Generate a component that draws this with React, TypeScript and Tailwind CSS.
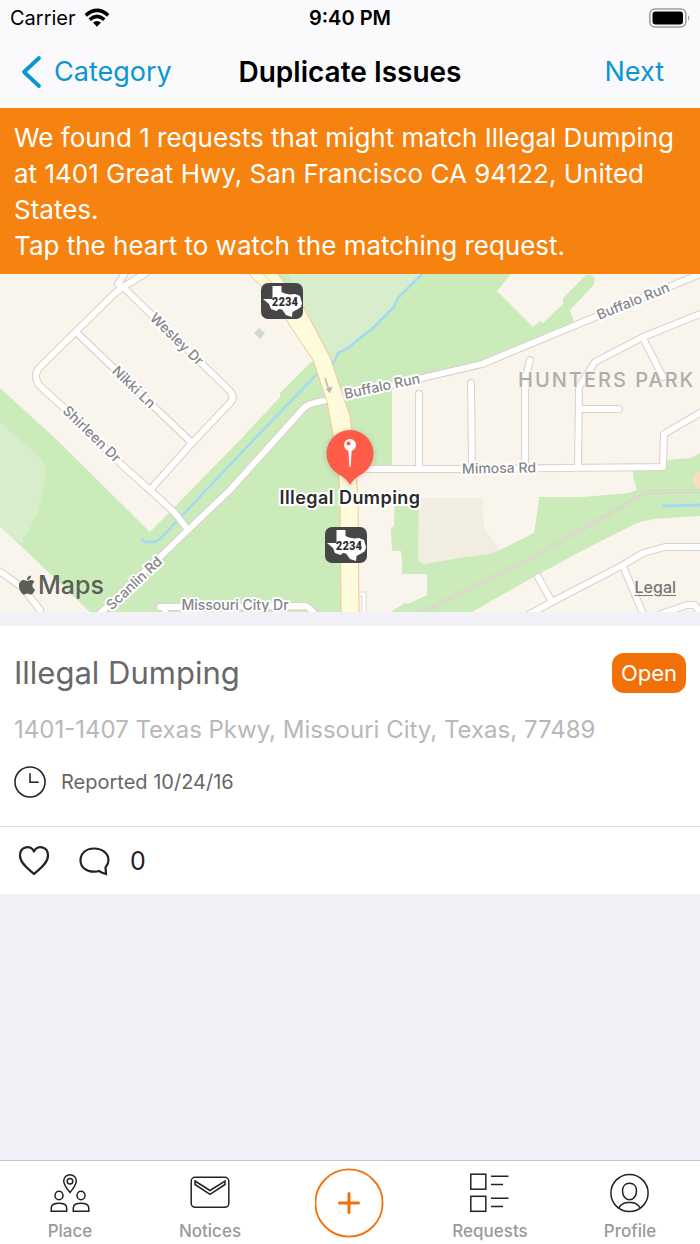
import type { ReactNode } from "react";
import { FaApple } from "react-icons/fa";

const GREEN = "#cbebbb";
const LIGHT_GREEN = "#d8edcb";
const LAND = "#f9f5ed";
const WATER = "#a3daf2";

const roads: string[] = [
  "M127 270L118 284L123 287L146 273",
  "M123 287L113 295L40 367Q36 371 36 376Q36 382 41 387L63 407L123 466L150 490L175 513L188 530",
  "M123 287L228 389Q236 397 230 403L192 443L150 490",
  "M76 332L192 443",
  "M95 618L160 557L188 530L230 490L302 410Q306 405 314 403L327 400L345 396L482 364L593 318L705 272",
  "M419 394L419 469",
  "M471 383L472 467",
  "M530 360L525 380L525 467",
  "M578 467L579 387L595 362L643 337L705 312",
  "M579 409L619 409",
  "M643 338L663 377",
  "M352 469L465 469L663 467L664 434L705 410",
  "M526 616L552 602L623 565L643 553L665 547L705 547",
  "M538 577L552 602",
  "M623 566L644 616",
  "M661 614L687 605L695 605L702 616",
  "M-4 570L2 573L23 588L40 610",
  "M160 607L305 606Q310 607 316 616",
  "M165 607L165 616",
];

function Shield({ x, y }: { x: number; y: number }) {
  return (
    <g transform={`translate(${x} ${y})`}>
      <rect width="42" height="36" rx="7" fill="#464646" />
      <path
        d="M11.500 3H20.500V9L24 10.500L29 11.500L34 11L39 13L41 20L40 24L37 26L31.500 29L31 34L25 32L21 26.500L18 26L15.500 28L10 26L8 21L2 16H11.500Z"
        fill="#fff"
      />
      <text
        x="24"
        y="23"
        textAnchor="middle"
        className="fill-[#2b2b2b] font-['Liberation_Sans_Narrow','Roboto_Condensed','Liberation_Sans',sans-serif] text-[13px] font-bold"
      >
        2234
      </text>
    </g>
  );
}

function StreetLabel({ x, y, angle, children }: { x: number; y: number; angle: number; children: string }) {
  return (
    <text
      transform={`translate(${x} ${y}) rotate(${angle})`}
      y="5"
      textAnchor="middle"
      stroke="#ffffff"
      strokeWidth="4"
      strokeLinejoin="round"
      paintOrder="stroke"
      className="fill-[#85858a] text-[14px] font-medium"
    >
      {children}
    </text>
  );
}

function MapView() {
  return (
    <section aria-label="Map" className="relative">
      <svg viewBox="0 274 700 338" className="block w-full" role="img" aria-label="Map of Illegal Dumping location">
        <rect y="274" width="700" height="338" fill={LAND} />
        <path d="M0 388L57 440L150 532L240 440L280 397V393L310 363L325 355L345 440V612H90L0 526Z" fill={GREEN} />
        <path d="M0 422L20 440L38 455Q46 465 46 474L38 513L21 544L0 526Z" fill={LIGHT_GREEN} />
        <path d="M275 274H511L497 291L533 327L540 321L543 323L563 304V298L585 276Q593 272 595 280Q595 284 590 289L570 310L574 322L482 364L392 385V466H345L330 360Z" fill={GREEN} />
        <path d="M288 274H422L398 298L393 308L373 328L348 348L338 353L334 362L322 350Z" fill={LIGHT_GREEN} />
        <path d="M395 498H419L484 529L500 550L534 533L539 497L583 497L628 493L637 490L633 477V471L665 470L668 460L690 458L700 453V516L653 519L637 523L593 545L537 575L472 612H390L405 603L408 604L427 595V574H402V551H392L391 528L394 526Z" fill={GREEN} />
        <path d="M483 498H539L534 533L484 529Z" fill={LAND} />
        <path d="M419 498H483L484 529L500 550L490 554L460 558L425 564Q417 563 418 555Z" fill="#f1eee1" />
        <path d="M401 551H408Q413 553 409 558L402 561Z" fill="#cdebaf" />
        <circle cx="702" cy="480" r="9" fill="#fbdcc0" />
        <path d="M259 328L265 333L260 339L254 333Z" fill="#d1d9cf" />

        <g fill="none" stroke={WATER}>
          <path d="M422 274L398 298L393 308L373 328L355 342L348 348L338 353L333 364L317 374L243 451L162 537Q157 542 153 542H145L141 538" strokeWidth="2.500" />
          <path d="M662 506L700 505" strokeWidth="3" />
        </g>
        <g fill="none">
          <path d="M418 614L460 593L533 557L648 492L700 491" stroke="#cfcbbd" strokeWidth="3" />
          <path d="M418 614L460 593L533 557L648 492L700 491" stroke="#e4e0d7" strokeWidth="1.500" />
          <path d="M356 594H364V614" stroke="#ddd5cb" strokeWidth="5" />
          <path d="M356 594H364V614" stroke="#fff" strokeWidth="3" />
        </g>
        <g fill="none" strokeLinecap="round" strokeLinejoin="round">
          {roads.map((d) => (
            <path key={d} d={d} stroke="#dbd3c9" strokeWidth="8" />
          ))}
          {roads.map((d) => (
            <path key={d} d={d} stroke="#fff" strokeWidth="5.800" />
          ))}
        </g>

        <path
          d="M248 273L275 300L290 326L313 360L327 402L334 440L339 480L340 500L341 613H359L358 500L355 460Q352 430 350 416L330 357L304 308L277 273Z"
          fill="#fdfbdb"
          stroke="#f3c890"
        />
        <path d="M262 273L272 283" stroke="#f3c890" />
        <g stroke="#b9b8ae" fill="#b9b8ae">
          <path d="M325 378L329 390" strokeWidth="1.500" />
          <path d="M326 389L332 387L330 393Z" strokeWidth="0.500" />
        </g>

        <Shield x={261} y={283} />
        <Shield x={325} y={527} />

        <g className="font-['Inter',sans-serif]">
          <StreetLabel x={177} y={339} angle={44}>Wesley Dr</StreetLabel>
          <StreetLabel x={134} y={387} angle={44}>Nikki Ln</StreetLabel>
          <StreetLabel x={92} y={434} angle={44}>Shirleen Dr</StreetLabel>
          <StreetLabel x={134} y={583} angle={-43}>Scanlin Rd</StreetLabel>
          <StreetLabel x={382} y={386} angle={-12}>Buffalo Run</StreetLabel>
          <StreetLabel x={633} y={301} angle={-22}>Buffalo Run</StreetLabel>
          <StreetLabel x={499} y={468} angle={-1}>Mimosa Rd</StreetLabel>
          <StreetLabel x={235} y={605} angle={0}>Missouri City Dr</StreetLabel>
          <text
            x="518"
            y="387"
            stroke="#f9f5ed"
            strokeWidth="2"
            paintOrder="stroke"
            className="fill-[#aeada9] text-[20px] font-medium tracking-widest"
          >
            HUNTERS PARK
          </text>
        </g>

        <path d="M350 489Q346 480 338 475A24 24 0 1 1 362 475Q354 480 350 489Z" fill="#000" opacity="0.12" className="blur-[3px]" />
        <path d="M350 485Q346 478 338 474A23.600 23.600 0 1 1 362 474Q354 478 350 485Z" fill="#ff5b49" />
        <circle cx="350" cy="445" r="6" fill="#fff" />
        <circle cx="348.500" cy="443.500" r="2" fill="#ff5b49" />
        <path d="M348.300 450H351.700L350.700 466Q350 468 349.300 466Z" fill="#fff" />
        <text
          x="350"
          y="504"
          textAnchor="middle"
          stroke="#fff"
          strokeWidth="4"
          strokeLinejoin="round"
          paintOrder="stroke"
          className="fill-[#2b2b2d] font-['Inter',sans-serif] text-[18px] font-semibold tracking-wide"
        >
          Illegal Dumping
        </text>
      </svg>
      <div className="absolute bottom-3 left-4 flex items-center text-[#5c5e58]">
        <FaApple className="size-[22px]" aria-hidden="true" />
        <span className="text-[25px] leading-[30px] font-medium">Maps</span>
      </div>
      <a href="#legal" className="absolute right-6 bottom-4 text-[16px] leading-[18px] font-medium text-[#777773] underline underline-offset-2">
        Legal
      </a>
    </section>
  );
}

function Tab({ label, children }: { label: string; children: ReactNode }) {
  return (
    <a href={`#${label.toLowerCase()}`} className="flex flex-1 flex-col items-center gap-2 pt-3 text-[#9a9a9a]">
      <svg viewBox="0 0 40 40" className="size-10 text-[#222]" fill="none" stroke="currentColor" strokeWidth="1.500" aria-hidden="true">
        {children}
      </svg>
      <span className="text-[17px] leading-[20px] font-medium">{label}</span>
    </a>
  );
}

export default function App() {
  return (
    <div className="flex min-h-screen flex-col bg-[#f2f1f7] font-['Inter',sans-serif] text-black">
      <header className="bg-[#fafafd]">
        <div className="grid h-9 grid-cols-[1fr_auto_1fr] items-center px-[10px] text-[20px] leading-6">
          <div className="flex items-center gap-2">
            <span>Carrier</span>
            <svg viewBox="0 0 26 20" className="h-5 w-[26px]" fill="none" stroke="#000" strokeWidth="3.600" aria-label="Wi-Fi">
              <path d="M1.800 7.300Q13-2.500 24.200 7.300" />
              <path d="M5.700 11.600Q13 5.200 20.300 11.600" />
              <path d="M9 14.600Q13 11.400 17 14.600L13 18.800Z" fill="#000" stroke="none" />
            </svg>
          </div>
          <span className="text-center font-semibold">9:40 PM</span>
          <svg viewBox="0 0 42 20" className="h-5 w-[42px] justify-self-end" aria-label="Battery full">
            <rect x="1.800" y="1" width="36" height="18" rx="5" fill="none" stroke="#9d9d9f" strokeWidth="1.500" />
            <rect x="4.500" y="3.500" width="30.500" height="13" rx="3" />
            <path d="M40 7Q42.500 10 40 13Z" fill="#9d9d9f" />
          </svg>
        </div>
        <div className="grid h-[72px] grid-cols-[1fr_auto_1fr] items-center px-5 text-[27px] leading-8">
          <button type="button" className="flex items-center gap-3 text-[#0c96cf]">
            <svg viewBox="0 0 22 34" className="h-[34px] w-[22px]" fill="none" stroke="currentColor" strokeWidth="3.800" strokeLinecap="round" strokeLinejoin="round" aria-hidden="true">
              <path d="M19 3L4 17L19 31" />
            </svg>
            Category
          </button>
          <h1 className="text-[28px] font-semibold">Duplicate Issues</h1>
          <button type="button" className="justify-self-end pr-4 text-[#0c96cf]">Next</button>
        </div>
      </header>

      <p className="bg-[#f68310] px-[14px] pt-3 pb-[10px] text-[26px] leading-9 text-white">
        We found 1 requests that might match Illegal Dumping at 1401 Great Hwy, San Francisco CA 94122, United States.
        <br />
        Tap the heart to watch the matching request.
      </p>

      <MapView />

      <main className="flex-1 pt-[14px]">
        <article className="bg-white">
          <div className="border-b border-[#dedede] px-[14px] pt-[26px] pb-7">
            <div className="flex items-center justify-between">
              <h2 className="text-[31px] leading-[42px] text-[#686868]">Illegal Dumping</h2>
              <span className="rounded-xl bg-[#f27008] px-[9px] py-1 text-[22px] leading-8 text-white">Open</span>
            </div>
            <p className="mt-[20px] text-[24px] leading-8 text-[#b8b8b8]">1401-1407 Texas Pkwy, Missouri City, Texas, 77489</p>
            <div className="mt-5 flex items-center gap-[15px] text-[20px] leading-8 text-[#666]">
              <svg viewBox="0 0 33 33" className="size-8" fill="none" stroke="#222" strokeWidth="1.600" aria-hidden="true">
                <circle cx="16.500" cy="16.500" r="15.500" />
                <path d="M16.500 7.500V16.800H25.500" />
              </svg>
              <span>Reported 10/24/16</span>
            </div>
          </div>
          <div className="flex h-[67px] items-center gap-7 px-[18px] text-[#222]">
            <button type="button" aria-label="Watch request">
              <svg viewBox="0 0 32 32" className="size-8" fill="none" stroke="currentColor" strokeWidth="2.200" strokeLinejoin="round" aria-hidden="true">
                <path d="M16 29C12 25 2 19 2 10.500C2 1 13-0.500 16 6.500C19-0.500 30 1 30 10.500C30 19 20 25 16 29Z" />
              </svg>
            </button>
            <button type="button" aria-label="Comments, 0" className="flex items-center gap-5 text-[25px] leading-8">
              <svg viewBox="0 0 32 32" className="size-8" fill="none" stroke="currentColor" strokeWidth="2.200" aria-hidden="true">
                <path d="M16 3.500C7.500 3.500 2.500 9 2.500 15.500C2.500 22.500 9 27 16.500 26.700Q19 26.700 21 26Q24 28 28 29L27.500 22.500Q30.500 19 30.500 15C30.500 8.500 24.500 3.500 16 3.500Z" />
              </svg>
              <span>0</span>
            </button>
          </div>
        </article>
      </main>

      <nav className="flex h-[84px] border-t border-[#c9c8ce] bg-white">
        <Tab label="Place">
          <path d="M20 19.500Q13.700 12 13.700 8A6.300 6.300 0 0 1 26.300 8Q26.300 12 20 19.500Z" />
          <circle cx="20" cy="8.200" r="2.800" />
          <ellipse cx="9" cy="22.500" rx="4" ry="4.300" />
          <ellipse cx="31" cy="22.500" rx="4" ry="4.300" />
          <path d="M1.200 38.300V35Q1.500 30.300 9 30.300Q16.500 30.300 16.700 35V38.300Z" />
          <path d="M23.300 38.300V35Q23.500 30.300 31 30.300Q38.500 30.300 38.800 35V38.300Z" />
        </Tab>
        <Tab label="Notices">
          <rect x="1.200" y="4.300" width="37.600" height="30" rx="4" />
          <path d="M5 8L20 17.500L35 8V11.500L20 21.300L5 11.500Z" />
        </Tab>
        <div className="flex flex-1 items-start justify-center pt-[7px]">
          <button type="button" aria-label="New request" className="text-[#f27008]">
            <svg viewBox="0 0 70 70" className="size-[70px]" fill="none" stroke="currentColor" aria-hidden="true">
              <circle cx="34" cy="35" r="33.600" strokeWidth="1.800" className="origin-center" />
              <path d="M34 25.500V44.500M24.500 35H43.500" strokeWidth="3" strokeLinecap="round" />
            </svg>
          </button>
        </div>
        <Tab label="Requests">
          <rect x="0.800" y="1.200" width="15" height="15" />
          <rect x="0.800" y="23.300" width="15" height="15" />
          <path d="M21 3.200H38.500M21 11.500H33M21 25.200H38.500M21 33.600H33" />
        </Tab>
        <Tab label="Profile">
          <circle cx="19.500" cy="20" r="18.600" />
          <path d="M19.500 10.300C15 10.300 12.500 13.500 12.500 18C12.500 23 15.500 26.700 19.500 26.700S26.500 23 26.500 18C26.500 13.500 24 10.300 19.500 10.300Z" />
          <path d="M8.800 35.200Q11.500 29.700 17.500 29.500H21.500Q27.500 29.700 30.200 35.200" />
        </Tab>
      </nav>
    </div>
  );
}
